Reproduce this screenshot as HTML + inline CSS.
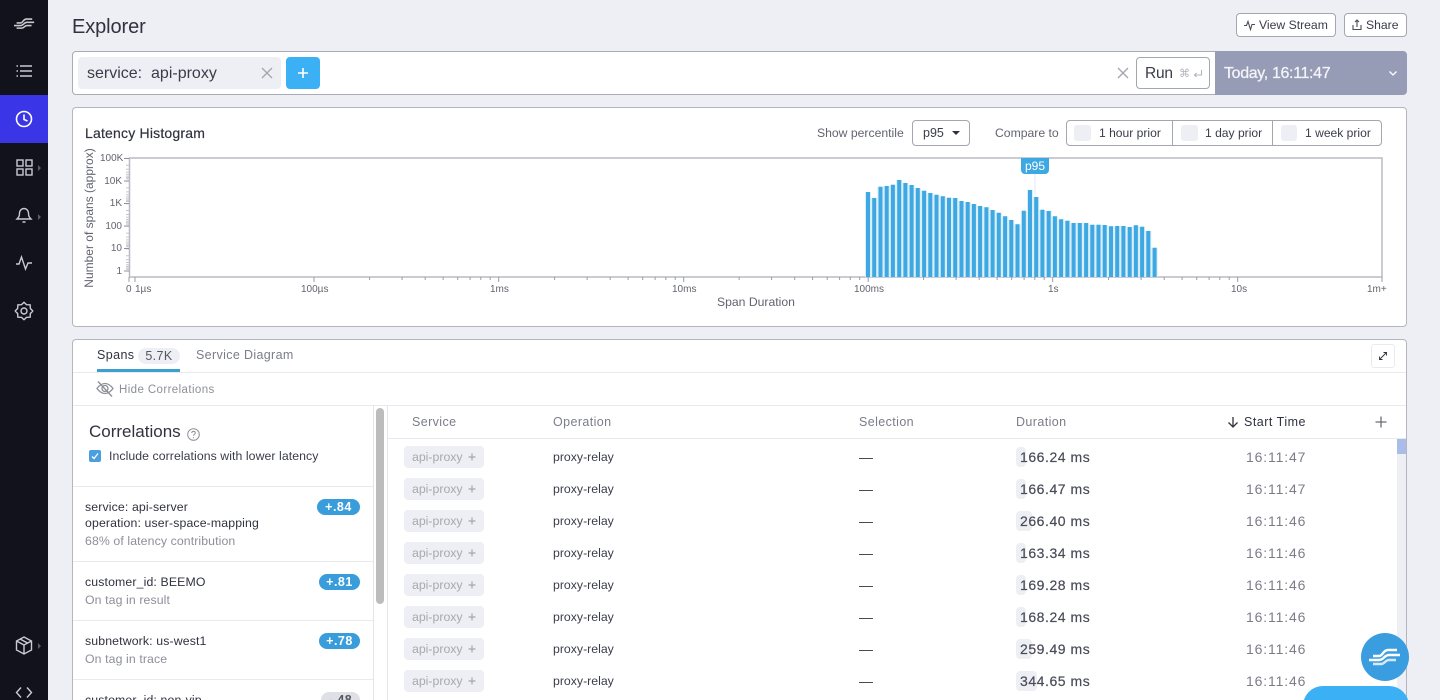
<!DOCTYPE html>
<html><head><meta charset="utf-8"><title>Explorer</title>
<style>
html,body{margin:0;padding:0;width:1440px;height:700px;overflow:hidden;background:#eeeff4;font-family:"Liberation Sans",sans-serif;color:#3a3c4a}
#root{position:relative;width:1440px;height:700px;overflow:hidden;background:#eeeff4}
.a{position:absolute;box-sizing:border-box}
.t{position:absolute;white-space:nowrap;line-height:20px;height:20px}
.tag{position:absolute;left:404px;width:80px;height:22px;background:#eeeff4;border-radius:4px}
.dur{position:absolute;left:1016px;height:20px;background:#eeeff4;border-radius:4px}
.badge{position:absolute;height:16px;border-radius:8px;background:#3a9ddb;color:#fff;font-size:12.5px;font-weight:bold;line-height:16px;text-align:center;letter-spacing:.5px}
.hr{position:absolute;height:1px;background:#e9eaf0}
.ax{font-size:10px;color:#62646f;line-height:12px;height:12px;position:absolute;white-space:nowrap}
.d{font-size:14px;letter-spacing:.55px;color:#4a4c58;-webkit-text-stroke:.2px #4a4c58}
.s{font-size:14px;letter-spacing:.85px;color:#7b7d88}
.c{font-size:12.300px;letter-spacing:.13px;color:#30323f}
.g{font-size:12.300px;letter-spacing:.1px;color:#8d8f99}
svg{position:absolute;overflow:visible}
</style></head><body><div id="root">

<!-- sidebar -->
<div class="a" style="left:0;top:0;width:48px;height:700px;background:#11121b"></div>
<div class="a" style="left:0;top:95px;width:48px;height:48px;background:#3a35e6"></div>
<svg style="left:0;top:0" width="48" height="700" fill="none" stroke="#c9cbd4" stroke-width="1.4">
 <g transform="translate(8.800 8) scale(.65)" stroke="#c8c9d0" stroke-width="2.400"><path d="M12 23h6c4 0 4-6 9-6h9"/><path d="M8 27h10c5 0 5-5 10-5h11"/><path d="M12 31h8c4 0 4-4 8-4h7"/></g>
 <path d="M20 66h12M20 71h12M20 76h12"/><path d="M16.500 66h1.500M16.500 71h1.500M16.500 76h1.500"/>
 <g stroke="#fff" stroke-width="1.600"><circle cx="24" cy="119" r="7.500"/><path d="M24 114.500v5l3.500 1.500"/></g>
 <rect x="17" y="160" width="6" height="6"/><rect x="26" y="160" width="6" height="6"/><rect x="17" y="169" width="6" height="6"/><rect x="26" y="169" width="6" height="6"/>
 <path d="M17 219h14c-2-2-2.500-3-2.500-6a4.500 4.500 0 0 0-9 0c0 3-.5 4-2.500 6zM22.500 222h3"/>
 <path d="M16 264h3l2.500-7 4 12 2.500-6h4"/>
 <path stroke-linejoin="round" d="M32.800 311L30.300 313.600 30.200 317.200 26.600 317.300 24 319.800 21.400 317.300 17.800 317.200 17.700 313.600 15.200 311 17.700 308.400 17.800 304.800 21.400 304.700 24 302.200 26.600 304.700 30.200 304.800 30.300 308.400z"/><circle cx="24" cy="311" r="3"/>
 <path d="M24 637l7.500 4v9l-7.500 4-7.500-4v-9zM16.500 641l7.500 4 7.500-4M24 645v9M20 639l7.500 4"/>
 <path d="M21 687.500l-4.500 5 4.500 5M27 687.500l4.500 5-4.500 5"/>
 <g fill="#5b5d68" stroke="none"><path d="M38 165l3 3-3 3zM38 214l3 3-3 3zM38 643l3 3-3 3z"/></g>
</svg>

<!-- header -->
<div class="t" style="left:72px;top:15px;font-size:20px;line-height:24px;height:24px;letter-spacing:-.1px;color:#30323f">Explorer</div>
<div class="a" style="left:1236px;top:13px;width:100px;height:24px;background:#fff;border:1px solid #a4a6b0;border-radius:4px"></div>
<svg style="left:1243px;top:19px" width="14" height="12" fill="none" stroke="#4a4c58" stroke-width="1.100"><path d="M1 6.500h2.500l1.500-4 2.500 8 1.500-5h3"/></svg>
<div class="t" style="left:1259px;top:15px;font-size:12.200px;color:#3a3c4a">View Stream</div>
<div class="a" style="left:1344px;top:13px;width:63px;height:24px;background:#fff;border:1px solid #a4a6b0;border-radius:4px"></div>
<svg style="left:1351px;top:18px" width="12" height="14" fill="none" stroke="#4a4c58" stroke-width="1.100"><path d="M2 7v4.500h8V7M6 9V2M4 4l2-2 2 2"/></svg>
<div class="t" style="left:1366px;top:15px;font-size:12.200px;color:#3a3c4a">Share</div>

<!-- search bar -->
<div class="a" style="left:72px;top:51px;width:1150px;height:44px;background:#fff;border:1px solid #a9abb5;border-radius:4px"></div>
<div class="a" style="left:1215px;top:51px;width:192px;height:44px;background:#979cb6;border-radius:0 4px 4px 0"></div>
<div class="a" style="left:78px;top:57px;width:203px;height:32px;background:#eeeff4;border-radius:4px"></div>
<div class="t" style="left:87px;top:64px;font-size:16px;white-space:pre;color:#3a3c4a">service:  api-proxy</div>
<svg style="left:261px;top:67px" width="12" height="12" stroke="#a3a5af" stroke-width="1.300"><path d="M1 1l10 10M11 1L1 11"/></svg>
<div class="a" style="left:286px;top:57px;width:34px;height:32px;background:#3bb0f5;border-radius:4px"></div>
<svg style="left:297px;top:67px" width="12" height="12" stroke="#fff" stroke-width="1.600"><path d="M6 1v10M1 6h10"/></svg>
<svg style="left:1117px;top:67px" width="12" height="12" stroke="#a3a5af" stroke-width="1.300"><path d="M1 1l10 10M11 1L1 11"/></svg>
<div class="a" style="left:1136px;top:57px;width:74px;height:32px;background:#fff;border:1px solid #a4a6b0;border-radius:4px"></div>
<div class="t" style="left:1145px;top:64px;font-size:15.500px;letter-spacing:-.2px;color:#3a3c4a">Run</div>
<div class="t" style="left:1179px;top:64px;font-size:11px;color:#b0b2bb">⌘</div>
<svg style="left:1193px;top:69px" width="10" height="10" fill="none" stroke="#b0b2bb"><path d="M8.500 1v5h-7M3.500 4l-2 2 2 2"/></svg>
<div class="t" style="left:1224px;top:64px;font-size:16px;letter-spacing:-.35px;color:#f4f5f8;-webkit-text-stroke:.25px #f4f5f8">Today, 16:11:47</div>
<svg style="left:1388px;top:70px" width="10" height="7" fill="none" stroke="#fff" stroke-width="1.300"><path d="M1.500 1.500L5 5l3.500-3.500"/></svg>

<!-- histogram card -->
<div class="a" style="left:72px;top:107px;width:1335px;height:220px;background:#fff;border:1px solid #b4b6bf;border-radius:4px"></div>
<div class="t" style="left:85px;top:123px;font-size:14px;letter-spacing:.2px;color:#30323f;-webkit-text-stroke:.2px #30323f">Latency Histogram</div>
<div class="t" style="left:817px;top:123px;font-size:12.200px;color:#62646f">Show percentile</div>
<div class="a" style="left:912px;top:120px;width:58px;height:26px;border:1px solid #a4a6b0;border-radius:4px"></div>
<div class="t" style="left:923px;top:123px;font-size:12.500px;color:#3a3c4a">p95</div>
<svg style="left:952px;top:131px" width="8" height="5"><path d="M0 0h8L4 4z" fill="#30323f"/></svg>
<div class="t" style="left:995px;top:123px;font-size:12.200px;color:#62646f">Compare to</div>
<div class="a" style="left:1066px;top:120px;width:316px;height:26px;border:1px solid #a4a6b0;border-radius:4px"></div>
<div class="a" style="left:1172px;top:121px;width:1px;height:24px;background:#a4a6b0"></div>
<div class="a" style="left:1272px;top:121px;width:1px;height:24px;background:#a4a6b0"></div>
<div class="a" style="left:1074px;top:125px;width:17px;height:16px;background:#eeeff4;border-radius:3px"></div>
<div class="a" style="left:1181px;top:125px;width:17px;height:16px;background:#eeeff4;border-radius:3px"></div>
<div class="a" style="left:1281px;top:125px;width:16px;height:16px;background:#eeeff4;border-radius:3px"></div>
<div class="t" style="left:1099px;top:123px;font-size:12.100px;color:#3a3c4a">1 hour prior</div>
<div class="t" style="left:1205px;top:123px;font-size:12.100px;color:#3a3c4a">1 day prior</div>
<div class="t" style="left:1305px;top:123px;font-size:12.100px;color:#3a3c4a">1 week prior</div>

<!-- chart -->
<svg style="left:0;top:0" width="1440" height="340" fill="none">
 <defs>
  <g id="m" stroke="#9a9ca6"><path d="M55.600 277v3M88.100 277v3M111.200 277v3M129.100 277v3M143.700 277v3M156.100 277v3M166.800 277v3M176.200 277v3"/><path d="M184.700 277v5"/></g>
  <g id="y" stroke="#c4c6ce"><path d="M126 .5h3M126 7.300h3M126 11.300h3M126 14.100h3M126 16.300h3M126 18.100h3M126 19.600h3M126 20.900h3"/></g>
 </defs>
 <rect x="129.500" y="158" width="1252.500" height="119" stroke="#b9bbc3" stroke-width="1.500"/>
 <path d="M129 277v5M135 277v5M314 277v5" stroke="#9a9ca6"/>
 <use href="#m" x="314"/><use href="#m" x="499"/><use href="#m" x="683.500"/><use href="#m" x="868"/><use href="#m" x="1053"/>
 <path d="M1382 277v5" stroke="#9a9ca6"/>
 <use href="#y" y="158"/><use href="#y" y="180.600"/><use href="#y" y="203.200"/><use href="#y" y="225.800"/><use href="#y" y="248.400"/>
 <path d="M124 158.500h5M124 181h5M124 203.500h5M124 226h5M124 248.500h5M124 271h5" stroke="#8e909a"/>
 <path stroke="#d9eefa" stroke-width="6.200" d="M868 192V277M874.200 198V277M880.500 186.700V277M886.700 186V277M892.900 184.700V277M899.200 180V277M905.400 183V277M911.600 185V277M917.800 188V277M924.100 190.700V277M930.300 193V277M936.500 194.700V277M942.800 196.300V277M949 197.700V277M955.200 198V277M961.500 201V277M967.700 202V277M973.900 204V277M980.100 206V277M986.400 207.300V277M992.600 210V277M998.800 212.700V277M1005.100 216.300V277M1011.300 220V277M1017.500 224.300V277M1023.800 210.700V277M1030 190V277M1036.200 197V277M1042.400 209.700V277M1048.700 211V277M1054.900 216.300V277M1061.100 219.300V277M1067.400 220.700V277M1073.600 223V277M1079.800 223V277M1086.100 223V277M1092.300 224.700V277M1098.500 224.700V277M1104.700 225V277M1111 226.300V277M1117.200 226V277M1123.400 226V277M1129.700 227V277M1135.900 225.300V277M1142.100 226.700V277M1148.300 231V277M1154.600 247.700V277"/>
 <path stroke="#3ea8e2" stroke-width="4" d="M868 192V277M874.200 198V277M880.500 186.700V277M886.700 186V277M892.900 184.700V277M899.200 180V277M905.400 183V277M911.600 185V277M917.800 188V277M924.100 190.700V277M930.300 193V277M936.500 194.700V277M942.800 196.300V277M949 197.700V277M955.200 198V277M961.500 201V277M967.700 202V277M973.900 204V277M980.100 206V277M986.400 207.300V277M992.600 210V277M998.800 212.700V277M1005.100 216.300V277M1011.300 220V277M1017.500 224.300V277M1023.800 210.700V277M1030 190V277M1036.200 197V277M1042.400 209.700V277M1048.700 211V277M1054.900 216.300V277M1061.100 219.300V277M1067.400 220.700V277M1073.600 223V277M1079.800 223V277M1086.100 223V277M1092.300 224.700V277M1098.500 224.700V277M1104.700 225V277M1111 226.300V277M1117.200 226V277M1123.400 226V277M1129.700 227V277M1135.900 225.300V277M1142.100 226.700V277M1148.300 231V277M1154.600 247.700V277"/>
 <path d="M1035 174V195" stroke="#d9eefa"/>
</svg>
<div class="a" style="left:1021px;top:158px;width:28px;height:16px;background:#3ea8e2;border-radius:0 0 4px 4px;color:#fff;font-size:12px;line-height:16px;text-align:center">p95</div>

<div class="ax" style="left:100px;top:153px;width:22px;text-align:right">100K</div>
<div class="ax" style="left:100px;top:176px;width:22px;text-align:right">10K</div>
<div class="ax" style="left:100px;top:198px;width:22px;text-align:right">1K</div>
<div class="ax" style="left:100px;top:221px;width:22px;text-align:right">100</div>
<div class="ax" style="left:100px;top:243px;width:22px;text-align:right">10</div>
<div class="ax" style="left:100px;top:266px;width:22px;text-align:right">1</div>
<div class="t" style="left:89px;top:218px;width:0;height:0;font-size:12px;color:#62646f"><span style="position:absolute;left:0;top:0;transform:translate(-50%,-50%) rotate(-90deg);display:block">Number of spans (approx)</span></div>
<div class="ax" style="left:126px;top:284px">0</div>
<div class="ax" style="left:135px;top:284px">1µs</div>
<div class="ax" style="left:301px;top:284px">100µs</div>
<div class="ax" style="left:490px;top:284px">1ms</div>
<div class="ax" style="left:672px;top:284px">10ms</div>
<div class="ax" style="left:854px;top:284px">100ms</div>
<div class="ax" style="left:1048px;top:284px">1s</div>
<div class="ax" style="left:1231px;top:284px">10s</div>
<div class="ax" style="left:1367px;top:284px">1m+</div>
<div class="t" style="left:717px;top:292px;font-size:12.200px;color:#62646f">Span Duration</div>

<!-- spans panel -->
<div class="a" style="left:72px;top:339px;width:1335px;height:380px;background:#fff;border:1px solid #b4b6bf;border-radius:4px"></div>
<div class="t" style="left:97px;top:345px;font-size:12.500px;letter-spacing:.4px;color:#30323f">Spans</div>
<div class="a" style="left:138px;top:348px;width:42px;height:16px;background:#eeeff4;border-radius:8px;font-size:12.500px;line-height:16px;text-align:center;color:#55575f;letter-spacing:.4px">5.7K</div>
<div class="t" style="left:196px;top:345px;font-size:12.500px;letter-spacing:.35px;color:#7b7d88">Service Diagram</div>
<div class="a" style="left:97px;top:369px;width:83px;height:4px;background:#3c9fd0"></div>
<div class="hr" style="left:73px;top:372px;width:1333px"></div>
<div class="a" style="left:1371px;top:344px;width:24px;height:24px;border:1px solid #e9eaf0;border-radius:3px"></div>
<svg style="left:1379px;top:352px" width="8" height="8" fill="none" stroke="#30323f" stroke-width=".9"><path d="M.5 7.500l7-7M4.500.5h3v3M.5 4.500v3h3"/></svg>

<svg style="left:96px;top:380px" width="18" height="18" fill="none" stroke="#8d8f99" stroke-width="1.300"><path d="M1 8.500C4 4.500 6.500 3.500 9 3.500s5 1 8 5c-3 4-5.500 5-8 5s-5-1-8-5z"/><circle cx="9" cy="8.500" r="3"/><path d="M2 1.500l14 15"/></svg>
<div class="t" style="left:119px;top:380px;font-size:11.500px;letter-spacing:.4px;color:#8d8f99">Hide Correlations</div>
<div class="hr" style="left:73px;top:405px;width:1333px"></div>

<!-- correlations -->
<div class="t" style="left:89px;top:422px;font-size:17px;color:#30323f">Correlations</div>
<svg style="left:187px;top:428px" width="13" height="13" fill="none" stroke="#8d8f99"><circle cx="6.500" cy="6.500" r="5.800"/><path d="M4.800 5c0-2.200 3.500-2.200 3.500 0 0 1.300-1.800 1.300-1.800 2.800M6.500 9.300v1"/></svg>
<div class="a" style="left:89px;top:450px;width:12px;height:12px;background:#4a9fe0;border-radius:2px"></div>
<svg style="left:89px;top:450px" width="12" height="12" fill="none" stroke="#fff" stroke-width="1.300"><path d="M3 6.500l2 2 4-5"/></svg>
<div class="t" style="left:109px;top:446px;font-size:12.300px;letter-spacing:.06px;color:#3a3c4a">Include correlations with lower latency</div>
<div class="hr" style="left:73px;top:486px;width:300px"></div>
<div class="t c" style="left:85px;top:497px">service: api-server</div>
<div class="t c" style="left:85px;top:513px">operation: user-space-mapping</div>
<div class="t g" style="left:85px;top:531px">68% of latency contribution</div>
<div class="badge" style="left:317px;top:499px;width:43px">+.84</div>
<div class="hr" style="left:73px;top:561px;width:300px"></div>
<div class="t c" style="left:85px;top:572px">customer_id: BEEMO</div>
<div class="t g" style="left:85px;top:590px">On tag in result</div>
<div class="badge" style="left:319px;top:574px;width:41px">+.81</div>
<div class="hr" style="left:73px;top:620px;width:300px"></div>
<div class="t c" style="left:85px;top:631px">subnetwork: us-west1</div>
<div class="t g" style="left:85px;top:649px">On tag in trace</div>
<div class="badge" style="left:319px;top:633px;width:41px">+.78</div>
<div class="hr" style="left:73px;top:679px;width:300px"></div>
<div class="t c" style="left:85px;top:690px">customer_id: non-vip</div>
<div class="badge" style="left:321px;top:692px;width:39px;background:#dfe0e6;color:#55575f">-.48</div>

<!-- divider / scrollbar -->
<div class="a" style="left:373px;top:406px;width:1px;height:294px;background:#e4e5ea"></div>
<div class="a" style="left:387px;top:406px;width:1px;height:294px;background:#e4e5ea"></div>
<div class="a" style="left:376px;top:408px;width:8px;height:196px;background:#bcbcbc;border-radius:4px"></div>

<!-- table header -->
<div class="t" style="left:412px;top:412px;font-size:12.500px;letter-spacing:.4px;color:#7b7d88">Service</div>
<div class="t" style="left:553px;top:412px;font-size:12.500px;letter-spacing:.4px;color:#7b7d88">Operation</div>
<div class="t" style="left:859px;top:412px;font-size:12.500px;letter-spacing:.4px;color:#7b7d88">Selection</div>
<div class="t" style="left:1016px;top:412px;font-size:12.500px;letter-spacing:.4px;color:#7b7d88">Duration</div>
<svg style="left:1227px;top:416px" width="12" height="12" fill="none" stroke="#30323f" stroke-width="1.300"><path d="M6 1v10M1.500 6.500L6 11l4.500-4.500"/></svg>
<div class="t" style="left:1244px;top:412px;font-size:12.500px;letter-spacing:.5px;color:#30323f">Start Time</div>
<svg style="left:1375px;top:416px" width="12" height="12" stroke="#6a6c76" stroke-width="1.300"><path d="M6 .5v11M.5 6h11"/></svg>
<div class="hr" style="left:388px;top:438px;width:1018px"></div>
<div class="a" style="left:1397px;top:439px;width:9px;height:261px;background:#eeeff4"></div>
<div class="a" style="left:1397px;top:439px;width:9px;height:15px;background:#a9bde8"></div>

<!-- rows -->
<div class="tag" style="top:446px"></div><div class="tag" style="top:478px"></div><div class="tag" style="top:510px"></div><div class="tag" style="top:542px"></div><div class="tag" style="top:574px"></div><div class="tag" style="top:606px"></div><div class="tag" style="top:638px"></div><div class="tag" style="top:670px"></div>
<svg style="left:0;top:0" width="1440" height="700" stroke="#a6a8b2" stroke-width="1.200"><path d="M472 453.500v7M468.500 457h7M472 485.500v7M468.500 489h7M472 517.500v7M468.500 521h7M472 549.500v7M468.500 553h7M472 581.500v7M468.500 585h7M472 613.500v7M468.500 617h7M472 645.500v7M468.500 649h7M472 677.500v7M468.500 681h7"/></svg>
<div class="dur" style="top:447px;width:10px"></div><div class="dur" style="top:479px;width:10px"></div><div class="dur" style="top:511px;width:16px"></div><div class="dur" style="top:543px;width:10px"></div><div class="dur" style="top:575px;width:10px"></div><div class="dur" style="top:607px;width:10px"></div><div class="dur" style="top:639px;width:16px"></div><div class="dur" style="top:671px;width:21px"></div>

<div class="t" style="left:412px;top:447px;font-size:12.300px;color:#a6a8b2">api-proxy</div><div class="t" style="left:553px;top:447px;font-size:12.300px">proxy-relay</div><div class="t" style="left:859px;top:447px;font-size:14px">—</div><div class="t d" style="left:1020px;top:447px">166.24 ms</div><div class="t s" style="left:1246px;top:447px">16:11:47</div>
<div class="t" style="left:412px;top:479px;font-size:12.300px;color:#a6a8b2">api-proxy</div><div class="t" style="left:553px;top:479px;font-size:12.300px">proxy-relay</div><div class="t" style="left:859px;top:479px;font-size:14px">—</div><div class="t d" style="left:1020px;top:479px">166.47 ms</div><div class="t s" style="left:1246px;top:479px">16:11:47</div>
<div class="t" style="left:412px;top:511px;font-size:12.300px;color:#a6a8b2">api-proxy</div><div class="t" style="left:553px;top:511px;font-size:12.300px">proxy-relay</div><div class="t" style="left:859px;top:511px;font-size:14px">—</div><div class="t d" style="left:1020px;top:511px">266.40 ms</div><div class="t s" style="left:1246px;top:511px">16:11:46</div>
<div class="t" style="left:412px;top:543px;font-size:12.300px;color:#a6a8b2">api-proxy</div><div class="t" style="left:553px;top:543px;font-size:12.300px">proxy-relay</div><div class="t" style="left:859px;top:543px;font-size:14px">—</div><div class="t d" style="left:1020px;top:543px">163.34 ms</div><div class="t s" style="left:1246px;top:543px">16:11:46</div>
<div class="t" style="left:412px;top:575px;font-size:12.300px;color:#a6a8b2">api-proxy</div><div class="t" style="left:553px;top:575px;font-size:12.300px">proxy-relay</div><div class="t" style="left:859px;top:575px;font-size:14px">—</div><div class="t d" style="left:1020px;top:575px">169.28 ms</div><div class="t s" style="left:1246px;top:575px">16:11:46</div>
<div class="t" style="left:412px;top:607px;font-size:12.300px;color:#a6a8b2">api-proxy</div><div class="t" style="left:553px;top:607px;font-size:12.300px">proxy-relay</div><div class="t" style="left:859px;top:607px;font-size:14px">—</div><div class="t d" style="left:1020px;top:607px">168.24 ms</div><div class="t s" style="left:1246px;top:607px">16:11:46</div>
<div class="t" style="left:412px;top:639px;font-size:12.300px;color:#a6a8b2">api-proxy</div><div class="t" style="left:553px;top:639px;font-size:12.300px">proxy-relay</div><div class="t" style="left:859px;top:639px;font-size:14px">—</div><div class="t d" style="left:1020px;top:639px">259.49 ms</div><div class="t s" style="left:1246px;top:639px">16:11:46</div>
<div class="t" style="left:412px;top:671px;font-size:12.300px;color:#a6a8b2">api-proxy</div><div class="t" style="left:553px;top:671px;font-size:12.300px">proxy-relay</div><div class="t" style="left:859px;top:671px;font-size:14px">—</div><div class="t d" style="left:1020px;top:671px">344.65 ms</div><div class="t s" style="left:1246px;top:671px">16:11:46</div>

<!-- floating -->
<div class="a" style="left:1303px;top:686px;width:106px;height:40px;background:#3bb0f5;border-radius:20px"></div>
<div class="a" style="left:1361px;top:633px;width:48px;height:48px;background:#3a9de0;border-radius:50%"></div>
<svg style="left:1361px;top:633px" width="48" height="48" fill="none" stroke="#fff" stroke-width="2.400"><path d="M12 23h6c4 0 4-6 9-6h9"/><path d="M8 27h10c5 0 5-5 10-5h11"/><path d="M12 31h8c4 0 4-4 8-4h7" stroke="#d6e9f8"/></svg>
</div></body></html>
